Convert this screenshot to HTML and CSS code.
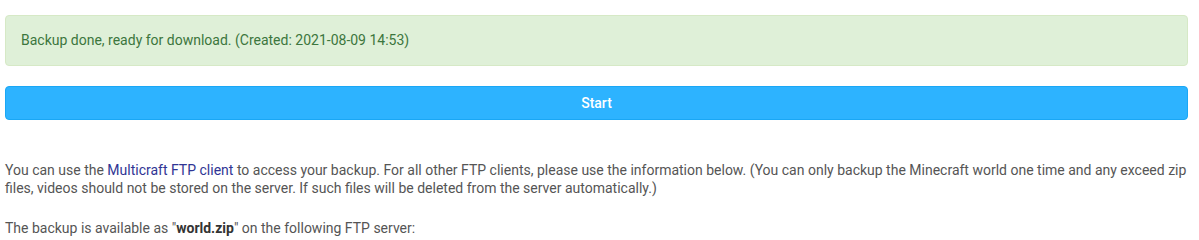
FILE: index.html
```html
<!DOCTYPE html>
<html lang="en">
  <head>
    <meta charset="UTF-8">
    <link rel="stylesheet" href="styles.css">
  </head>
  <body>
    <div class="backup">
      <div class="alert alert-success">Backup done, ready for download. (Created: 2021-08-09 14:53)</div>
      <button class="btn btn-start">Start</button>
      <p class="info">You can use the <a href="#">Multicraft FTP client</a> to access your backup. For all other FTP clients, please use the information below. (You can only backup the Minecraft world one time and any exceed zip files, videos should not be stored on the server. If such files will be deleted from the server automatically.)</p>
      <p class="info">The backup is available as "<b>world.zip</b>" on the following FTP server:</p>
    </div>
  </body>
</html>
```

FILE: styles.css
```css
body {
  margin: 0;
  font-family: Roboto, "Liberation Sans", sans-serif;
  font-size: 14px;
  line-height: 18px;
  color: #555;
  background: #fff;
}

.backup {
  padding: 15px 11px 0 5px;
}

.alert {
  padding: 15px;
  line-height: 19px;
  border: 1px solid #d6e9c6;
  border-radius: 4px;
  margin-bottom: 20px;
}

.alert-success {
  background: #dff0d8;
  color: #3c763d;
}

.btn {
  display: block;
  width: 100%;
  height: 34px;
  font-family: inherit;
  font-size: 14px;
  font-weight: 500;
  border-radius: 4px;
  cursor: pointer;
}

.btn-start {
  background: #2db3ff;
  border: 1px solid #1aa7f5;
  color: #fff;
}

.info {
  margin: 0 0 22px;
}

.backup .btn + .info {
  margin-top: 41px;
}

.info a {
  color: #303594;
  text-decoration: none;
}

.info b {
  color: #333;
}
```
